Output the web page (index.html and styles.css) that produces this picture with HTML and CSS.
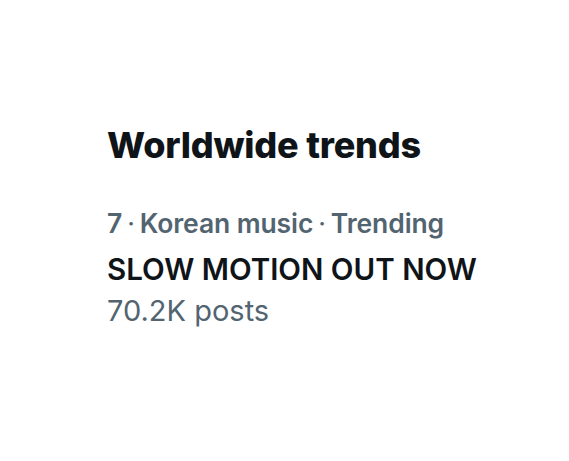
FILE: index.html
```html
<!DOCTYPE html>
<html>
<head>
<meta charset="utf-8">
<link rel="stylesheet" href="styles.css">
</head>
<body>
<main class="panel">
  <h1 class="title">Worldwide trends</h1>
  <div class="trend">
    <div class="meta">7<span class="dot">·</span>Korean music<span class="dot">·</span>Trending</div>
    <div class="name">SLOW MOTION OUT NOW</div>
    <div class="count">70.2K posts</div>
  </div>
</main>
</body>
</html>
```

FILE: styles.css
```css
html, body {
  margin: 0;
  background: #ffffff;
}
body {
  font-family: Inter, "Liberation Sans", sans-serif;
  color: #0f1419;
}
.panel {
  padding: 123px 0 0 107px;
}
.title {
  margin: 0;
  font-size: 36px;
  font-weight: 800;
  line-height: 44px;
  letter-spacing: -0.2px;
}
.trend {
  margin-top: 36px;
  display: flex;
  flex-direction: column;
}
.meta {
  color: #536471;
  font-size: 26.5px;
  font-weight: 600;
  line-height: 40px;
  letter-spacing: -0.1px;
}
.dot {
  margin: 0 5px;
  font-weight: 400;
}
.name {
  margin-top: 6px;
  font-size: 29.5px;
  font-weight: 600;
  line-height: 40px;
}
.count {
  margin-top: 2px;
  color: #536471;
  font-size: 29px;
  font-weight: 400;
  line-height: 40px;
}
```
